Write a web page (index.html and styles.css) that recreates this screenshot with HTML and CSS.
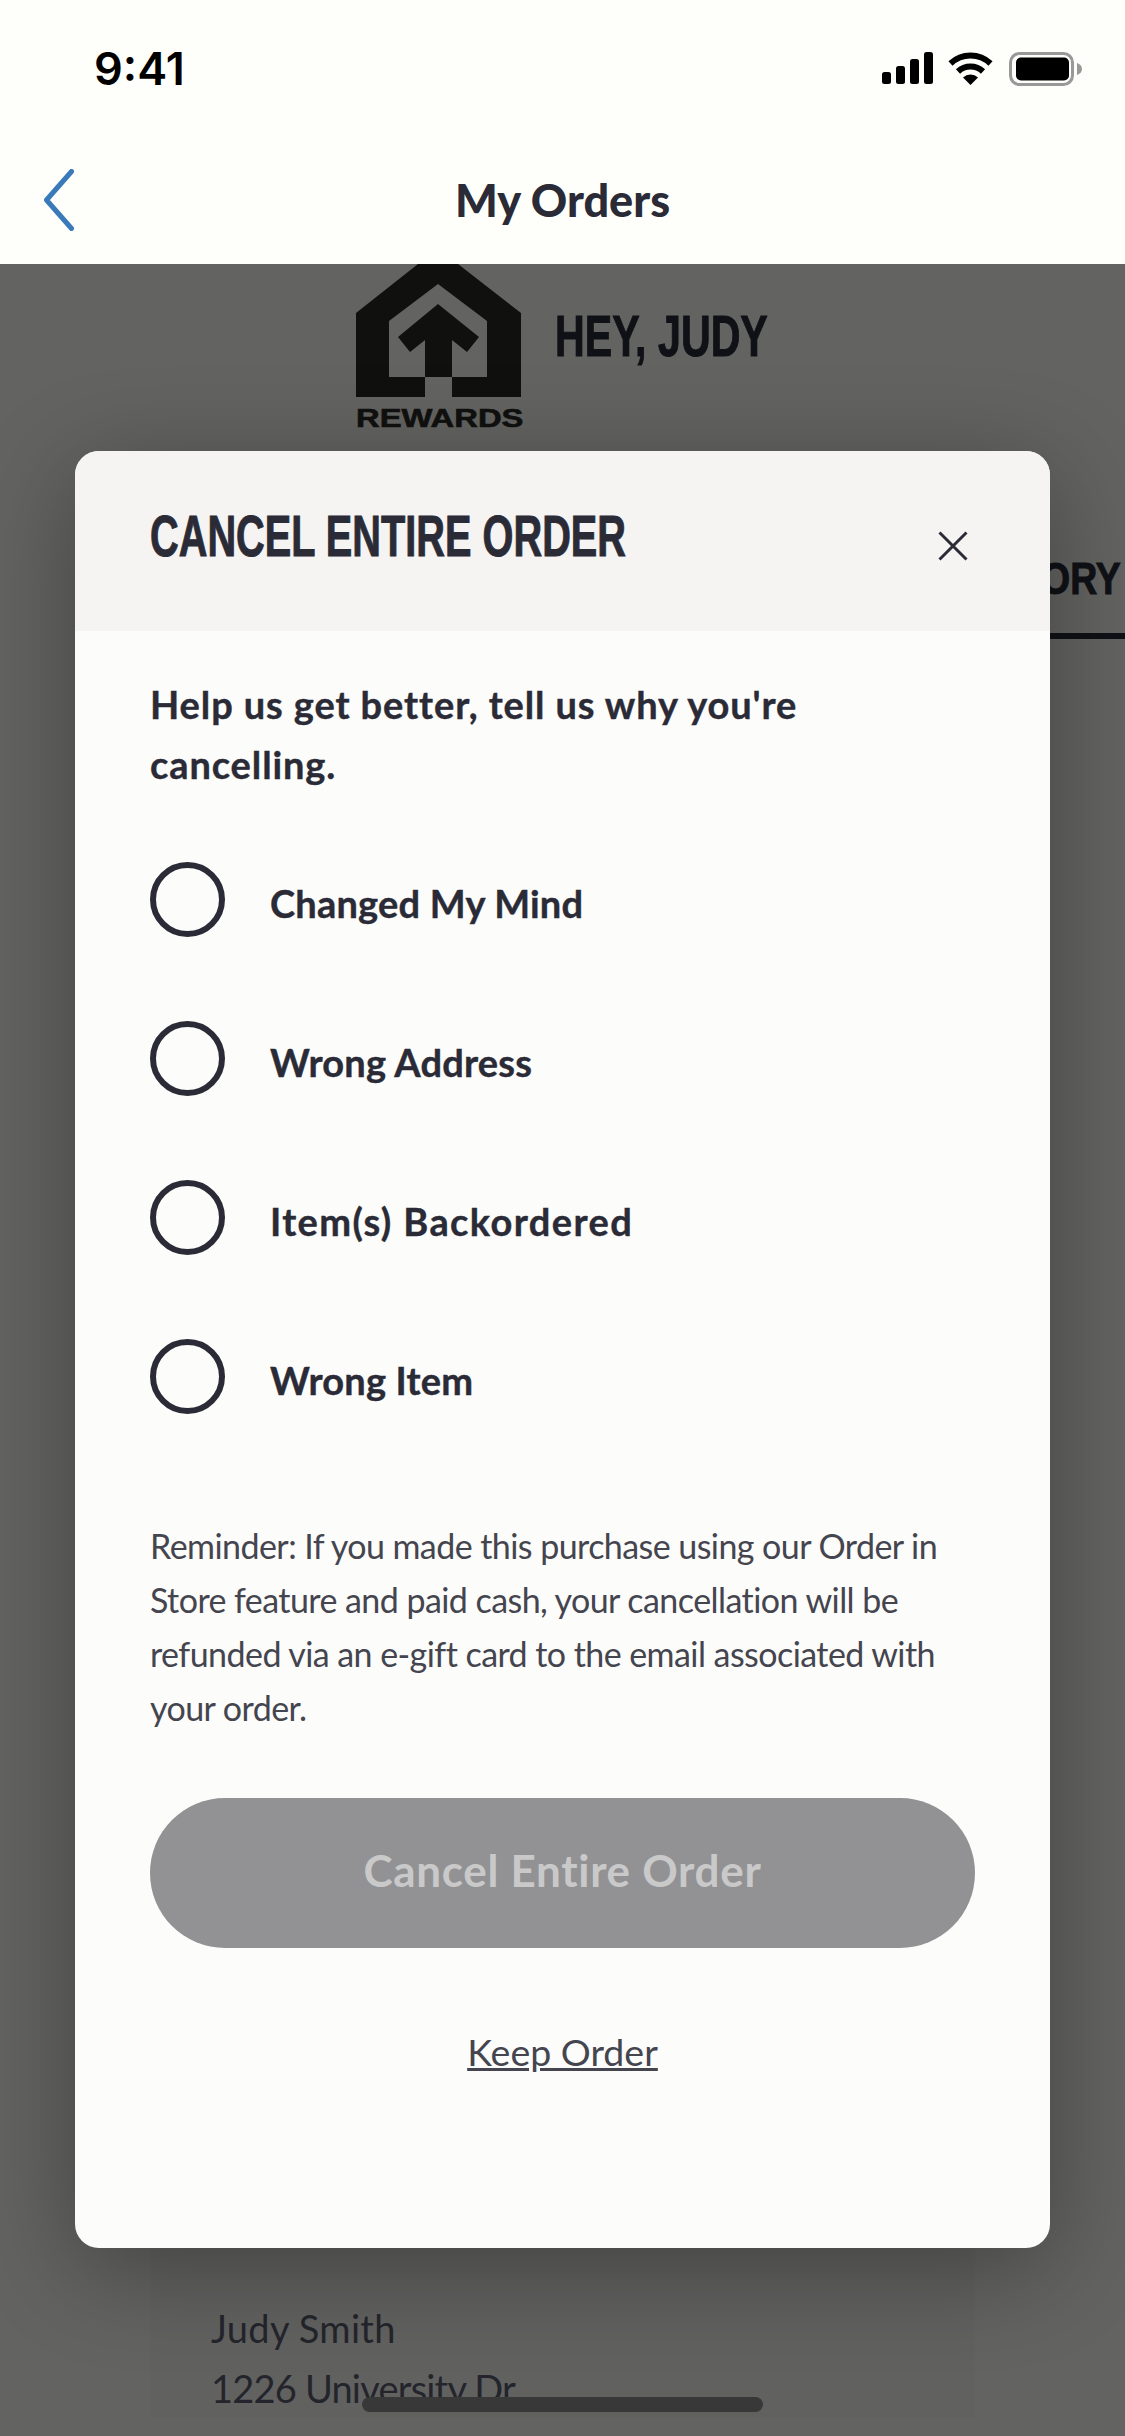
FILE: index.html
```html
<!DOCTYPE html>
<html lang="en">
<head>
  <meta charset="UTF-8" />
  <meta name="viewport" content="width=device-width, initial-scale=1.0" />
  <title>My Orders</title>
  <link rel="stylesheet" href="styles.css">
</head>
<body>

  <header class="top">
    <div class="status">
      <span class="time">9:41</span>
      <div class="status-icons">
        <svg class="signal" width="51" height="32" viewBox="0 0 51 32">
          <rect x="0" y="20" width="9" height="12" rx="2.5" />
          <rect x="14" y="14" width="9" height="18" rx="2.5" />
          <rect x="28" y="7" width="9" height="25" rx="2.5" />
          <rect x="42" y="0" width="9" height="32" rx="2.5" />
        </svg>
        <svg class="wifi" width="45" height="33" viewBox="0 0 45 33">
          <path d="M2.5 11.5 A29 29 0 0 1 42.5 11.5" fill="none" stroke="#000" stroke-width="6" />
          <path d="M10 19.5 A18 18 0 0 1 35 19.5" fill="none" stroke="#000" stroke-width="6" />
          <path d="M22.5 33 L15 25.5 A11 11 0 0 1 30 25.5 Z" />
        </svg>
        <svg class="battery" width="73" height="34" viewBox="0 0 73 34">
          <rect x="1.5" y="1.5" width="62" height="31" rx="9" fill="none" stroke="#999" stroke-width="3" />
          <rect x="7" y="5.5" width="53" height="23" rx="5" />
          <path d="M68 11 C71 12 73 14 73 17 C73 20 71 22 68 23 Z" fill="#999" />
        </svg>
      </div>
    </div>
    <nav class="nav">
      <svg class="back" width="30" height="62" viewBox="0 0 30 62">
        <path d="M27.5 2.5 L2.5 31 L27.5 59.5" fill="none" stroke="#3a7abb" stroke-width="5" stroke-linecap="round" stroke-linejoin="round" />
      </svg>
      <h1 class="nav-title">My Orders</h1>
    </nav>
  </header>

  <main class="page">
    <div class="hero">
      <div class="brand">
        <svg class="brand-mark" width="165" height="133" viewBox="356 264 165 133">
          <path fill-rule="evenodd" fill="#10100f" d="M418 264 H458 L521 313 V397 H452 V377 H487 V321 L438 284 L389 321 V377 H425 V397 H356 V313 Z" />
          <path fill="#10100f" d="M438 304 L479 337 L467 352 L452 340 V377 H425 V340 L410 352 L398 337 Z" />
        </svg>
        <span class="brand-name">REWARDS</span>
      </div>
      <h2 class="greeting">HEY, JUDY</h2>
    </div>

    <div class="tabs">
      <span class="tab"><span class="tab-label">ORY</span></span>
    </div>

    <section class="address">
      <p>Judy Smith</p>
      <p class="address-street">1226 University Dr</p>
    </section>
  </main>

  <div class="modal">
    <div class="modal-head">
      <h2 class="modal-title">CANCEL ENTIRE ORDER</h2>
      <svg class="close" width="30" height="30" viewBox="0 0 30 30">
        <path d="M1.5 1.5 L28.5 28.5 M28.5 1.5 L1.5 28.5" fill="none" stroke="#2a2b36" stroke-width="3" />
      </svg>
    </div>
    <div class="modal-body">
      <p class="question">Help us get better, tell us why you're<br />cancelling.</p>
      <ul class="reasons">
        <li class="reason"><span class="radio"></span><span class="reason-label">Changed My Mind</span></li>
        <li class="reason"><span class="radio"></span><span class="reason-label">Wrong Address</span></li>
        <li class="reason"><span class="radio"></span><span class="reason-label reason-label-wide">Item(s) Backordered</span></li>
        <li class="reason"><span class="radio"></span><span class="reason-label">Wrong Item</span></li>
      </ul>
      <p class="reminder">Reminder: If you made this purchase using our Order in<br />Store feature and paid cash, your cancellation will be<br />refunded via an e-gift card to the email associated with<br />your order.</p>
      <button class="cancel-btn">Cancel Entire Order</button>
      <a class="keep" href="#">Keep Order</a>
    </div>
  </div>

  <div class="home-bar"></div>

</body>
</html>
```

FILE: styles.css
```css
* {
  box-sizing: border-box;
}

body {
  margin: 0;
  width: 1125px;
  height: 2436px;
  overflow: hidden;
  position: relative;
  background: #636361;
  font-family: Lato, "Open Sans", sans-serif;
  color: #2a2b36;
}

h1, h2, p, ul {
  margin: 0;
  padding: 0;
}

.top {
  height: 264px;
  background: #fefffb;
}

.status {
  height: 138px;
  padding: 45px 43px 0 94px;
  display: flex;
  justify-content: space-between;
  align-items: flex-start;
}

.time {
  font-family: Inter, sans-serif;
  font-size: 45px;
  font-weight: 600;
  line-height: 48px;
  color: #000;
}

.status-icons {
  display: flex;
  align-items: flex-start;
  gap: 15px;
  padding-top: 7px;
}

.wifi {
  margin-right: 1px;
}

.nav {
  height: 126px;
  display: flex;
  align-items: center;
  position: relative;
  justify-content: center;
}

.back {
  position: absolute;
  left: 44px;
  top: 31px;
}

.nav-title {
  font-size: 45px;
  font-weight: 900;
  margin-top: -2px;
}

.page {
  height: 2172px;
  overflow: hidden;
}

.hero {
  display: flex;
  justify-content: center;
  gap: 34px;
  padding-right: 3px;
}

.brand {
  display: flex;
  flex-direction: column;
  width: 165px;
}

.brand-mark {
  display: block;
}

.brand-name {
  font-family: "Liberation Sans", sans-serif;
  font-weight: 700;
  font-size: 25px;
  line-height: 18px;
  margin-top: 12px;
  color: #10100f;
  display: block;
  transform: scaleX(1.31);
  transform-origin: left center;
  -webkit-text-stroke: 0.6px #10100f;
}

/* no condensed face installed, so squeeze the bold one */
.greeting,
.modal-title,
.tab-label {
  font-family: "Liberation Sans", sans-serif;
  font-weight: 700;
  white-space: nowrap;
  transform-origin: left center;
  -webkit-text-stroke: 1px currentColor;
}

.greeting {
  width: 211px;
  font-size: 58px;
  line-height: 60px;
  margin-top: 42px;
  color: #101116;
  transform: scaleX(0.71);
}

.tabs {
  display: flex;
  justify-content: flex-end;
  margin-top: 127px;
}

.tab {
  line-height: 50px;
  padding: 0 4px 20px 40px;
  border-bottom: 6px solid #101116;
}

.tab-label {
  display: inline-block;
  font-size: 44px;
  color: #101116;
  transform: scaleX(0.85);
  transform-origin: right center;
}

.address {
  margin: 0 150px;
  padding: 1659px 61px 0;
  background: #616160;
  font-size: 38px;
  letter-spacing: 0.3px;
  line-height: 60px;
  color: #24252c;
}

.address-street {
  letter-spacing: -0.8px;
}

.modal {
  position: absolute;
  left: 75px;
  top: 451px;
  width: 975px;
  height: 1797px;
  border-radius: 24px;
  overflow: hidden;
  background: #fcfcfa;
  box-shadow: 0 20px 100px rgba(0, 0, 0, 0.32);
}

.modal-head {
  height: 180px;
  background: #f5f4f2;
  padding: 53px 82px 0 75px;
  display: flex;
  justify-content: space-between;
  align-items: flex-start;
}

.modal-title {
  width: 474px;
  font-size: 58px;
  line-height: 64px;
  transform: scaleX(0.685);
}

.close {
  margin-top: 27px;
}

.modal-body {
  padding: 43px 75px 0;
}

.question {
  font-size: 38px;
  font-weight: 700;
  letter-spacing: 0.9px;
  line-height: 60px;
  -webkit-text-stroke: 0.4px currentColor;
}

.reasons {
  list-style: none;
  margin-top: 26px;
}

.reason {
  height: 159px;
  display: flex;
  align-items: center;
  gap: 45px;
}

.radio {
  width: 75px;
  height: 75px;
  border-radius: 50%;
  border: 6px solid #2a2b36;
  flex: none;
}

.reason-label {
  font-size: 38px;
  font-weight: 700;
  letter-spacing: 0.2px;
  padding-top: 6px;
  -webkit-text-stroke: 0.4px currentColor;
}

.reason-label-wide {
  letter-spacing: 1.4px;
}

.reminder {
  margin-top: 63px;
  font-size: 34px;
  letter-spacing: -0.56px;
  line-height: 54px;
  color: #44454f;
}

.cancel-btn {
  display: block;
  width: 825px;
  height: 150px;
  margin-top: 63px;
  padding: 0 0 7px;
  border: none;
  border-radius: 75px;
  background: #929295;
  color: #c9c9c9;
  font-family: inherit;
  font-size: 44px;
  font-weight: 700;
  letter-spacing: 0.7px;
}

.keep {
  display: block;
  width: max-content;
  margin: 80px auto 0;
  font-size: 37.5px;
  line-height: 48px;
  color: #44454f;
}

.home-bar {
  position: absolute;
  left: 362px;
  top: 2397px;
  width: 401px;
  height: 15px;
  border-radius: 8px;
  background: #383838;
}
```
